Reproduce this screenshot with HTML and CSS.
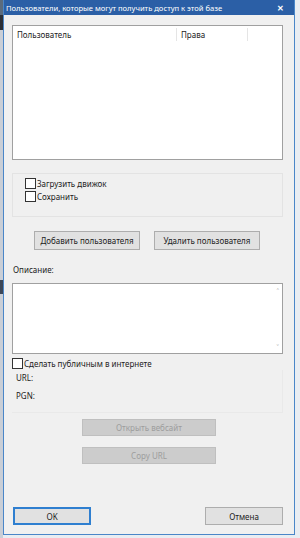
FILE: index.html
```html
<!DOCTYPE html>
<html lang="ru">
<head>
    <meta charset="UTF-8">
    <meta name="viewport" content="width=device-width, initial-scale=1.0">
    <title>Пользователи</title>
    <link rel="stylesheet" href="styles.css">
</head>
<body>
    <div class="desk-edge"></div>
    <div class="window">
        <div class="titlebar">
            <span class="title">Пользователи, которые могут получить доступ к этой базе</span>
            <span class="close">&#x2715;</span>
        </div>

        <div class="content">
            <div class="list-box">
                <div class="list-head">
                    <div class="col col-user">Пользователь</div>
                    <div class="col col-rights">Права</div>
                    <div class="col col-rest"></div>
                </div>
            </div>

            <div class="group">
                <label class="check"><span class="box"></span>Загрузить движок</label>
                <label class="check"><span class="box"></span>Сохранить</label>
            </div>

            <div class="user-buttons">
                <button class="btn btn-user">Добавить пользователя</button>
                <button class="btn btn-user">Удалить пользователя</button>
            </div>

            <div class="label desc-label">Описание:</div>
            <div class="textarea">
                <span class="arrow up">&#x2C4;</span>
                <span class="arrow down">&#x2C5;</span>
            </div>

            <label class="check public"><span class="box"></span>Сделать публичным в интернете</label>
            <div class="web-group">
                <div class="label">URL:</div>
                <div class="label">PGN:</div>
            </div>

            <div class="web-buttons">
                <button class="btn btn-off">Открыть вебсайт</button>
                <button class="btn btn-off">Copy URL</button>
            </div>

            <div class="footer-buttons">
                <button class="btn btn-ok">OK</button>
                <button class="btn btn-cancel">Отмена</button>
            </div>
        </div>
    </div>
</body>
</html>
```

FILE: styles.css
```css
body {
    margin: 0;
    padding: 0;
    width: 300px;
    height: 538px;
    overflow: hidden;
    display: flex;
    background: #e9edf2;
    font-family: "Noto Sans", "Open Sans", sans-serif;
    font-size: 8px;
    color: #222;
}

.desk-edge {
    width: 3px;
    height: 538px;
    background: linear-gradient(to bottom, #5b6b7d 0, #5b6b7d 15px, #2b2f36 15px, #2b2f36 30px, #c9ced6 30px, #c9ced6 280px, #3c4656 280px, #3c4656 294px, #c9ced6 294px);
}

.window {
    width: 292px;
    height: 535px;
    box-sizing: border-box;
    background: #f0f0f0;
    border: 1px solid #4a86c8;
    border-top: none;
    display: flex;
    flex-direction: column;
}

.titlebar {
    height: 15px;
    flex-shrink: 0;
    background: #2b5fa6;
    color: #fff;
    display: flex;
    align-items: center;
    justify-content: space-between;
    padding: 0 10px 0 2px;
}

.title {
    font-size: 7.6px;
}

.close {
    font-size: 8px;
    font-weight: bold;
}

.content {
    flex: 1;
    overflow: hidden;
    padding: 10px 11px 0 8px;
    display: flex;
    flex-direction: column;
}

.list-box {
    height: 133px;
    flex-shrink: 0;
    background: #fff;
    border: 1px solid #a0a0a0;
}

.list-head {
    display: flex;
    height: 13px;
    margin-top: 2px;
}

.col {
    padding: 1px 4px;
    border-right: 1px solid #e5e5e5;
    line-height: 11px;
}

.col-user {
    width: 155px;
}

.col-rights {
    width: 62px;
}

.col-rest {
    border-right: none;
}

.group {
    margin-top: 13px;
    height: 38px;
    flex-shrink: 0;
    border: 1px solid #e3e3e3;
    padding: 4px 12px 0;
    display: flex;
    flex-direction: column;
    gap: 2px;
}

.check {
    display: flex;
    align-items: center;
    height: 11px;
    line-height: 11px;
}

.box {
    width: 9px;
    height: 9px;
    border: 1px solid #333;
    background: #fff;
    margin-right: 1px;
}

.user-buttons {
    margin-top: 14px;
    display: flex;
    gap: 14px;
    padding-left: 22px;
}

.btn {
    font-family: "Noto Sans", "Open Sans", sans-serif;
    font-size: 8px;
    color: #222;
    background: #e1e1e1;
    border: 1px solid #adadad;
    padding: 0;
    margin: 0;
}

.btn-user {
    width: 106px;
    height: 19px;
}

.label {
    line-height: 11px;
    height: 11px;
}

.desc-label {
    margin-top: 14px;
    padding-left: 1px;
}

.textarea {
    margin-top: 8px;
    height: 69px;
    flex-shrink: 0;
    background: #fff;
    border: 1px solid #a0a0a0;
    position: relative;
}

.arrow {
    position: absolute;
    right: 3px;
    color: #b0b0b0;
    font-size: 9px;
    line-height: 8px;
}

.arrow.up {
    top: 4px;
}

.arrow.down {
    bottom: 1px;
}

.public {
    margin-top: 4px;
}

.web-group {
    margin-top: 1px;
    height: 40px;
    border: 1px solid #e9e9e9;
    border-left: none;
    border-top: none;
    padding: 2px 0 0 4px;
    display: flex;
    flex-direction: column;
    gap: 7px;
    width: 266px;
}

.web-buttons {
    margin-top: 6px;
    display: flex;
    flex-direction: column;
    gap: 11px;
    padding-left: 70px;
}

.btn-off {
    width: 134px;
    height: 17px;
    color: #9d9d9d;
    background: #cccccc;
    border-color: #bfbfbf;
}

.footer-buttons {
    margin-top: 43px;
    display: flex;
    justify-content: space-between;
    padding-left: 1px;
}

.btn-ok,
.btn-cancel {
    width: 78px;
    height: 18px;
}

.btn-ok {
    border: 1px solid #2f7fd0;
    box-shadow: inset 0 0 0 1px #2f7fd0;
}
```
